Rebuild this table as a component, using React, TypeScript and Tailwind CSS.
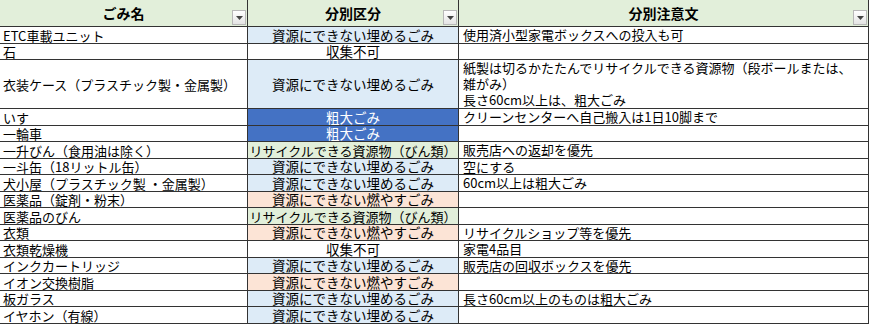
import React from "react";

type Kind = "umeru" | "moyasu" | "sodai" | "recycle" | "fuka";

const rows: { name: string; kind: Kind; note: string[]; h: string }[] = [
  { name: "ETC車載ユニット", kind: "umeru", note: ["使用済小型家電ボックスへの投入も可"], h: "h-[17px]" },
  { name: "石", kind: "fuka", note: [], h: "h-[16px]" },
  {
    name: "衣装ケース（プラスチック製・金属製）",
    kind: "umeru",
    note: [
      "紙製は切るかたたんでリサイクルできる資源物（段ボールまたは、",
      "雑がみ）",
      "長さ60cm以上は、粗大ごみ",
    ],
    h: "h-[49px]",
  },
  { name: "いす", kind: "sodai", note: ["クリーンセンターへ自己搬入は1日10脚まで"], h: "h-[17px]" },
  { name: "一輪車", kind: "sodai", note: [], h: "h-[16px]" },
  { name: "一升びん（食用油は除く）", kind: "recycle", note: ["販売店への返却を優先"], h: "h-[17px]" },
  { name: "一斗缶（18リットル缶）", kind: "umeru", note: ["空にする"], h: "h-[16px]" },
  { name: "犬小屋（プラスチック製 ・金属製）", kind: "umeru", note: ["60cm以上は粗大ごみ"], h: "h-[17px]" },
  { name: "医薬品（錠剤・粉末）", kind: "moyasu", note: [], h: "h-[16px]" },
  { name: "医薬品のびん", kind: "recycle", note: [], h: "h-[17px]" },
  { name: "衣類", kind: "moyasu", note: ["リサイクルショップ等を優先"], h: "h-[16px]" },
  { name: "衣類乾燥機", kind: "fuka", note: ["家電4品目"], h: "h-[17px]" },
  { name: "インクカートリッジ", kind: "umeru", note: ["販売店の回収ボックスを優先"], h: "h-[16px]" },
  { name: "イオン交換樹脂", kind: "moyasu", note: [], h: "h-[17px]" },
  { name: "板ガラス", kind: "umeru", note: ["長さ60cm以上のものは粗大ごみ"], h: "h-[16px]" },
  { name: "イヤホン（有線）", kind: "umeru", note: [], h: "h-[17px]" },
];

const kindLabel: Record<Kind, string> = {
  umeru: "資源にできない埋めるごみ",
  moyasu: "資源にできない燃やすごみ",
  sodai: "粗大ごみ",
  recycle: "リサイクルできる資源物（びん類）",
  fuka: "収集不可",
};

const kindClass: Record<Kind, string> = {
  umeru: "bg-[#ddebf7] text-black text-[13.5px]",
  moyasu: "bg-[#fce4d6] text-black text-[13.5px]",
  sodai: "bg-[#4472c4] text-white text-[13.5px]",
  recycle: "bg-[#e2efda] text-black text-[13px]",
  fuka: "bg-white text-black text-[13.5px]",
};

function FilterBtn() {
  return (
    <div className="absolute right-[1px] bottom-[1px] w-[14px] h-[15px] border border-[#b8b8b8] bg-gradient-to-b from-[#ffffff] to-[#e4e4e4] flex items-center justify-center">
      <svg width="7" height="4" viewBox="0 0 7 4">
        <polygon points="0,0 7,0 3.5,4" fill="#444" />
      </svg>
    </div>
  );
}

function HeaderCell({ children }: { children: React.ReactNode }) {
  return (
    <div className="relative h-[27px] bg-[#e2efda] border-r border-b border-[#333333] flex items-center justify-center font-bold text-[14px] leading-[18px] text-black">
      <span>{children}</span>
      <FilterBtn />
    </div>
  );
}

export default function App() {
  return (
    <div className="w-[870px] h-[324px] bg-white overflow-hidden text-black font-['Noto_Sans_CJK_JP','Noto_Sans',sans-serif]">
      <div className="grid grid-cols-[248px_211px_410px] w-[869px]">
        <HeaderCell>ごみ名</HeaderCell>
        <HeaderCell>分別区分</HeaderCell>
        <HeaderCell>分別注意文</HeaderCell>
        {rows.map((r, i) => (
          <React.Fragment key={i}>
            <div
              className={`${r.h} border-r border-b border-[#333333] flex items-center pl-[3px] text-[13px] leading-[15px] whitespace-nowrap`}
            >
              {r.name}
            </div>
            <div
              className={`${r.h} border-r border-b border-[#333333] flex items-center justify-center leading-[15px] whitespace-nowrap ${kindClass[r.kind]}`}
            >
              {kindLabel[r.kind]}
            </div>
            <div
              className={`${r.h} border-r border-b border-[#333333] flex flex-col justify-center pl-[4px] text-[13px] leading-[16px] whitespace-nowrap`}
            >
              {r.note.map((n, j) => (
                <div key={j}>{n}</div>
              ))}
            </div>
          </React.Fragment>
        ))}
      </div>
    </div>
  );
}
